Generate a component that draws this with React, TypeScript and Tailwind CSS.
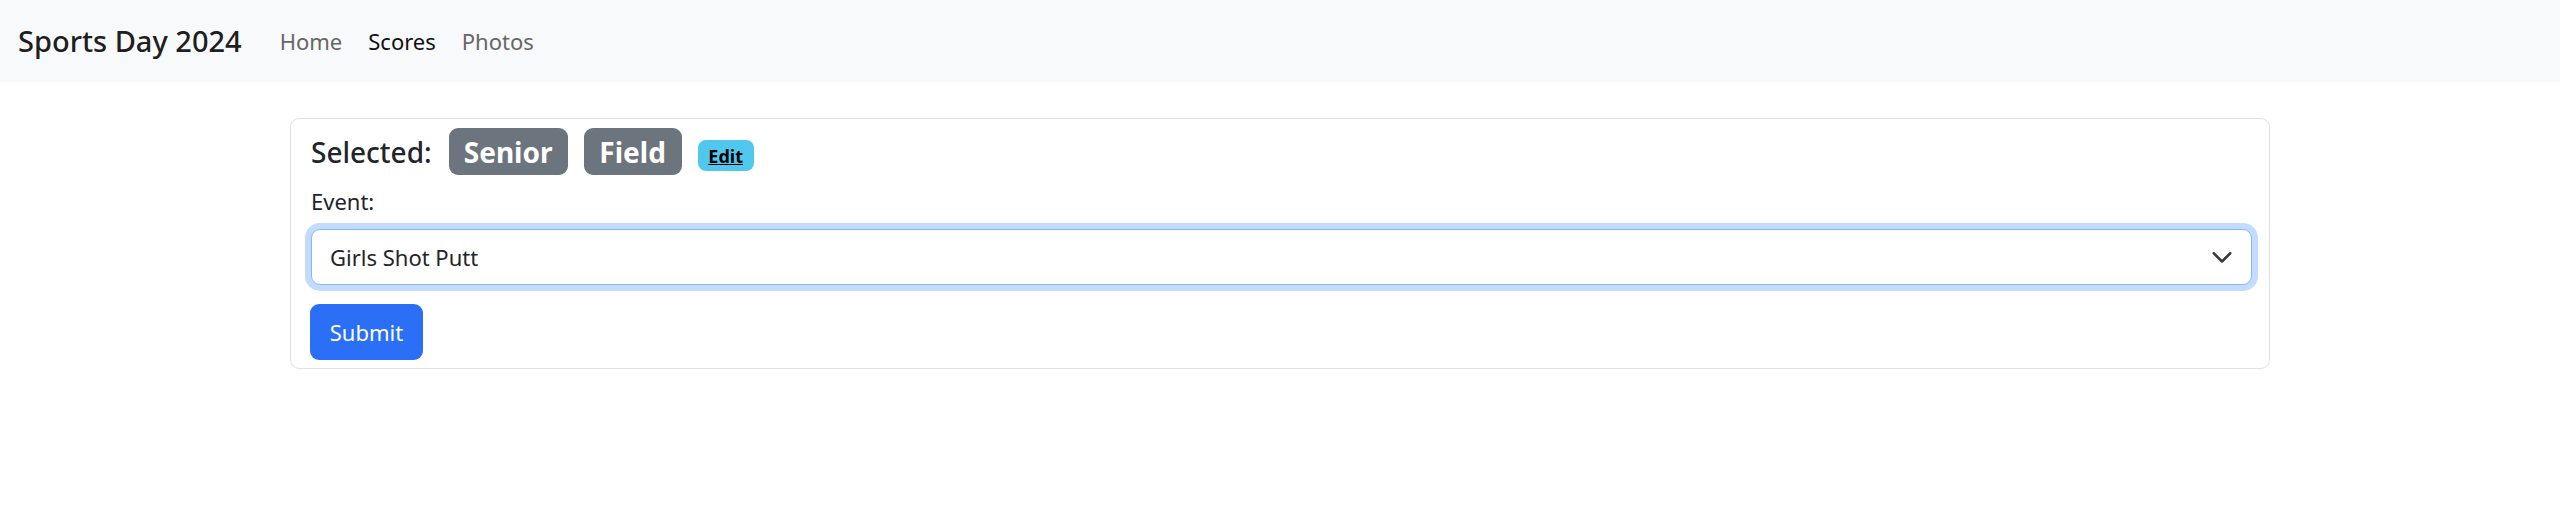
import React from "react";

export default function App() {
  return (
    <div className="min-h-[521px] bg-white font-['Noto_Sans',sans-serif] text-[#212529]">
      <nav className="flex h-[82px] items-center bg-[#f8f9fa] px-[18px]">
        <a className="mr-[25px] text-[29px] font-medium leading-[40px] text-[#000000e6]" href="#">
          Sports Day 2024
        </a>
        <div className="flex items-center">
          <a className="px-[13px] text-[22px] leading-[36px] text-[#666666]" href="#">
            Home
          </a>
          <a className="px-[13px] text-[22px] leading-[36px] text-[#111111]" href="#">
            Scores
          </a>
          <a className="px-[13px] text-[22px] leading-[36px] text-[#666666]" href="#">
            Photos
          </a>
        </div>
      </nav>

      <main className="mx-auto mt-[36px] w-[1980px]">
        <div className="rounded-[9px] border border-[#dee2e6] pl-[20px] pr-[17px] pt-[9px] pb-[8px]">
          <div className="flex h-[47px] items-center">
            <span className="mr-[17px] text-[28px] font-medium leading-[36px]">Selected:</span>
            <span className="mr-[16px] flex h-[47px] w-[119px] items-center justify-center rounded-[9px] bg-[#6c757d] text-[28px] font-bold text-white">
              Senior
            </span>
            <span className="mr-[16px] flex h-[47px] w-[98px] items-center justify-center rounded-[9px] bg-[#6c757d] text-[28px] font-bold text-white">
              Field
            </span>
            <span className="mt-[8px] flex h-[31px] w-[56px] items-center justify-center rounded-[8px] bg-[#50c8ee]">
              <a className="text-[18px] font-bold leading-none text-black underline" href="#">
                Edit
              </a>
            </span>
          </div>

          <label className="mt-[8px] block text-[22px] leading-[36px]">Event:</label>

          <div className="relative mt-[10px]">
            <select
              defaultValue="Girls Shot Putt"
              className="block h-[56px] w-full appearance-none rounded-[9px] border border-[#86b7fe] bg-white pl-[18px] text-[22px] text-[#212529] shadow-[0_0_0_6px_rgba(13,110,253,0.25)] outline-none"
            >
              <option>Girls Shot Putt</option>
              <option>Boys Shot Putt</option>
            </select>
            <svg
              className="pointer-events-none absolute right-[18px] top-[19px] h-[18px] w-[24px]"
              viewBox="0 0 16 12"
              fill="none"
            >
              <path d="M2.5 3.5l5.5 5.5 5.5-5.5" stroke="#343a40" strokeWidth="1.7" strokeLinecap="round" strokeLinejoin="round" />
            </svg>
          </div>

          <button className="-ml-[1px] mt-[19px] flex h-[56px] w-[113px] items-center justify-center rounded-[9px] bg-[#2a6ff6] text-[22px] text-white">
            Submit
          </button>
        </div>
      </main>
    </div>
  );
}
